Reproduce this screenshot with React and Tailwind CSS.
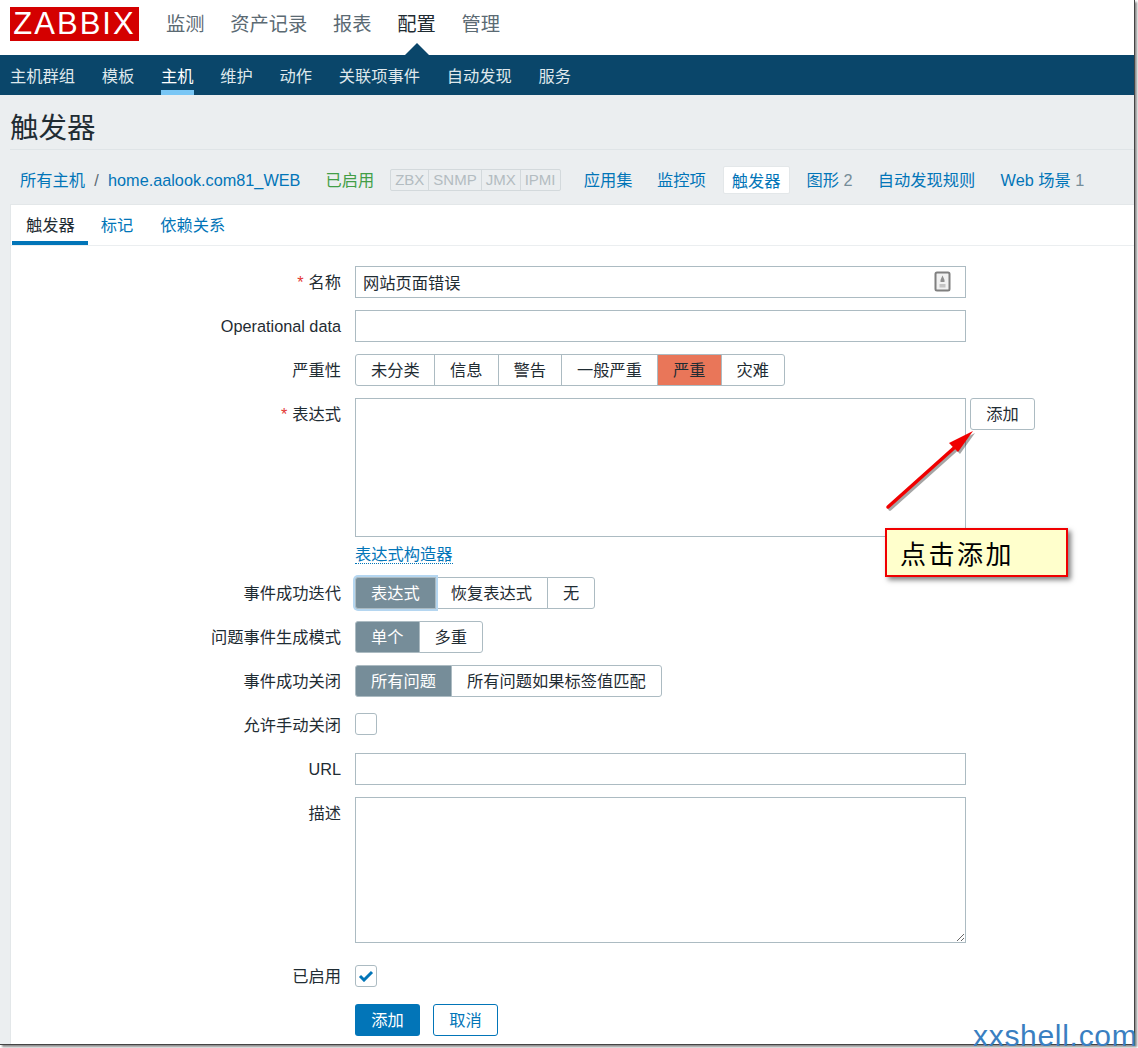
import React from "react";

const FONT = "font-['Liberation_Sans','Noto_Sans_CJK_SC',sans-serif]";

const mainMenu = ["监测", "资产记录", "报表", "配置", "管理"];
const subMenu = ["主机群组", "模板", "主机", "维护", "动作", "关联项事件", "自动发现", "服务"];

const Label = ({ required, children, className = "pt-[5px]" }) => (
  <div className={`w-[330px] shrink-0 text-right text-[16.25px] leading-[22px] text-[#1f2c33] ${className}`}>
    {required && <span className="text-[#e33734] mr-[5px]">*</span>}
    {children}
  </div>
);

const Row = ({ label, required, labelClass, children, className = "mb-3" }) => (
  <div className={`flex ${className}`}>
    <Label required={required} className={labelClass}>{label}</Label>
    <div className="ml-[14px] flex">{children}</div>
  </div>
);

const Segmented = ({ items, active, focus, firstClass = "pr-[15px]", activeClass = "bg-[#768d99] text-white border-[#768d99]" }) => (
  <div className="flex h-8 text-[16.25px] leading-[31px] text-[#1f2c33]">
    {items.map((item, i) => (
      <div
        key={item}
        className={`pl-[15px] border border-[#acbbc2] ${i > 0 ? "-ml-px pr-[15px]" : firstClass} ${i === 0 ? "rounded-l-[3px]" : ""} ${
          i === items.length - 1 ? "rounded-r-[3px]" : ""
        } ${i === active ? activeClass : "bg-white"} ${
          i === active && focus ? "relative shadow-[0_0_0_2px_#b5d6f0]" : ""
        }`}
      >
        {item}
      </div>
    ))}
  </div>
);

const TextInput = ({ value = "", children }) => (
  <div className="relative">
    <input
      readOnly
      defaultValue={value}
      className="block w-[611px] h-8 border border-[#acbbc2] bg-white px-[7px] text-[16.25px] text-[#1f2c33] outline-none"
    />
    {children}
  </div>
);

const HostTab = ({ children, count }) => (
  <span className="text-[#0275b8]">
    {children}
    {count && <span className="text-[#768d99]"> {count}</span>}
  </span>
);

export default function App() {
  return (
    <div className={`relative w-[1138px] h-[1048px] overflow-hidden bg-white ${FONT}`}>
      <div className="w-[1135px] h-[1045px] flex flex-col bg-[#ebeef0] border-r border-b border-[#444444] shadow-[2px_2px_2px_rgba(0,0,0,0.45)]">
        {/* top menu */}
        <header className="h-[55px] shrink-0 bg-white flex items-start pl-[10px] pt-[7px]">
          <div className="w-[129px] h-[34px] bg-[#d40000] text-white text-[31px] leading-[34px] tracking-[2px] text-center">
            ZABBIX
          </div>
          <nav className="flex gap-[25.75px] ml-[27px] text-[19.25px] leading-[36px] text-[#5b6a73]">
            {mainMenu.map((item) => (
              <span key={item} className={item === "配置" ? "relative text-[#1f2c33]" : ""}>
                {item}
                {item === "配置" && (
                  <span className="absolute left-1/2 -translate-x-1/2 top-[36px] w-0 h-0 border-x-[12px] border-x-transparent border-b-[12px] border-b-[#0a466a]" />
                )}
              </span>
            ))}
          </nav>
        </header>
        <nav className="h-10 shrink-0 bg-[#0a466a] flex gap-[26.75px] pl-[10px] text-[16.25px] leading-[42px] text-[#dfe8ec]">
          {subMenu.map((item) => (
            <span key={item} className={item === "主机" ? "h-10 text-white border-b-[5px] border-[#79c6f5]" : ""}>
              {item}
            </span>
          ))}
        </nav>

        {/* title */}
        <div className="ml-[10px] h-[55px] shrink-0 border-b border-[#dfe4e7]">
          <h1 className="text-[28.5px] leading-[66px] font-normal text-[#1f2c33]">触发器</h1>
        </div>

        {/* host navigation */}
        <div className="h-[54px] shrink-0 flex items-center pl-5 pt-[6px] text-[16.25px]">
          <span className="text-[#0275b8]">所有主机</span>
          <span className="mx-[9.25px] text-[#5b6a73]">/</span>
          <span className="text-[#0275b8]">home.aalook.com81_WEB</span>
          <span className="ml-[25px] text-[#429e47]">已启用</span>
          <div className="ml-4 h-[22px] flex border border-[#d3d9dc] rounded-[2px] text-[#b3bcc1] text-[15px] leading-[20px]">
            <span className="px-[4px]">ZBX</span>
            <span className="px-[4px] border-l border-[#d3d9dc]">SNMP</span>
            <span className="px-[4px] border-l border-[#d3d9dc]">JMX</span>
            <span className="px-[4px] border-l border-[#d3d9dc]">IPMI</span>
          </div>
          <div className="ml-[23.25px] flex gap-[24.5px]">
            <HostTab>应用集</HostTab>
            <HostTab>监控项</HostTab>
          </div>
          <div className="ml-[17px] h-7 px-2 leading-7 bg-white rounded-[2px] border border-[#e3e7e9] text-[#0275b8]">触发器</div>
          <div className="ml-[17px] flex gap-[25.25px]">
            <HostTab count="2">图形</HostTab>
            <HostTab>自动发现规则</HostTab>
            <HostTab count="1">Web 场景</HostTab>
          </div>
        </div>

        {/* form card */}
        <main className="ml-[10px] flex-1 bg-white border-t border-l border-[#e3e7e9]">
          <div className="h-[41px] flex gap-[26px] pl-[15px] border-b border-[#ebeef0] text-[16.25px] leading-[40px] text-[#0275b8]">
            <span className="relative text-[#1f2c33]">
              触发器
              <span className="absolute -left-[14px] -right-[13px] top-[36px] h-1 bg-[#0275b8]" />
            </span>
            <span>标记</span>
            <span className="ml-px">依赖关系</span>
          </div>

          <form className="pt-[20px]">
            <Row label="名称" required>
              <TextInput value="网站页面错误">
                <svg className="absolute left-[579px] top-[5px]" width="17" height="21" viewBox="0 0 17 21">
                  <rect x="1.5" y="1.5" width="14" height="18" rx="1.5" fill="#f1f1f1" stroke="#7f7f7f" strokeWidth="2" />
                  <path d="M8.5 4.5 L10.5 9 V11 H6.5 V9 Z" fill="#8f8f8f" />
                  <rect x="5.5" y="13" width="6" height="3.5" fill="#c4c4c4" />
                </svg>
              </TextInput>
            </Row>
            <Row label="Operational data">
              <TextInput />
            </Row>
            <Row label="严重性">
              <Segmented
                items={["未分类", "信息", "警告", "一般严重", "严重", "灾难"]}
                active={4}
                firstClass="pr-[14.25px]"
                activeClass="relative bg-[#e97659] border-[#768d99]"
              />
            </Row>
            <Row label="表达式" required className="mb-[8px]">
              <textarea readOnly className="block w-[611px] h-[139px] border border-[#acbbc2] bg-white outline-none" />
              <button
                type="button"
                className="ml-1 w-[65px] h-8 pt-px border border-[#acbbc2] rounded-[3px] bg-white text-[16.25px] text-[#1f2c33]"
              >
                添加
              </button>
            </Row>
            <div className="ml-[344px] mb-[12px] h-5 text-[16.25px] leading-[18px]">
              <span className="text-[#0275b8] border-b border-dotted border-[#0275b8]">表达式构造器</span>
            </div>
            <Row label="事件成功迭代">
              <Segmented items={["表达式", "恢复表达式", "无"]} active={0} focus />
            </Row>
            <Row label="问题事件生成模式">
              <Segmented items={["单个", "多重"]} active={0} />
            </Row>
            <Row label="事件成功关闭" className="mb-4">
              <Segmented items={["所有问题", "所有问题如果标签值匹配"]} active={0} />
            </Row>
            <Row label="允许手动关闭" labelClass="pt-px" className="mb-[17px]">
              <div className="w-[22px] h-[22px] border border-[#acbbc2] rounded-[3px] bg-white" />
            </Row>
            <Row label="URL">
              <TextInput />
            </Row>
            <Row label="描述" className="mb-[22px]">
              <textarea readOnly className="block w-[611px] h-[146px] border border-[#acbbc2] bg-white outline-none" />
            </Row>
            <Row label="已启用" labelClass="pt-0" className="mb-[17px]">
              <div className="w-[22px] h-[22px] border border-[#acbbc2] rounded-[3px] bg-white flex items-center justify-center">
                <svg width="16" height="12" viewBox="0 0 16 12">
                  <path d="M2 6 L6 10 L14 2" fill="none" stroke="#0275b8" strokeWidth="3" />
                </svg>
              </div>
            </Row>
            <div className="ml-[344px] flex gap-[13px] text-[16.25px]">
              <button type="button" className="w-[65px] h-8 pt-px rounded-[3px] bg-[#0275b8] text-white">
                添加
              </button>
              <button type="button" className="w-[65px] h-8 pt-px rounded-[3px] border border-[#0275b8] bg-white text-[#0275b8]">
                取消
              </button>
            </div>
          </form>
        </main>
      </div>

      {/* screenshot annotation */}
      <svg className="absolute left-[880px] top-[425px]" width="100" height="92" viewBox="0 0 100 92">
        <g transform="translate(2 2)" opacity="0.35" fill="#000" stroke="#000">
          <path d="M8 82 L74 23" strokeWidth="3.5" strokeLinecap="round" />
          <path d="M93 6 L69 18 L78 27 Z" stroke="none" />
        </g>
        <path d="M8 82 L74 23" stroke="#f00000" strokeWidth="3.5" strokeLinecap="round" />
        <path d="M93 6 L69 18 L78 27 Z" fill="#f00000" />
      </svg>
      <div className="absolute left-[885px] top-[528px] w-[183px] h-[49px] pl-[13px] border-2 border-[#f00000] bg-[#ffffcc] shadow-[3px_3px_5px_rgba(0,0,0,0.5)] text-[26px] leading-[52px] tracking-[2.5px] text-black font-['Liberation_Serif','Noto_Sans_CJK_SC',serif]">
        点击添加
      </div>
      <div className="absolute left-[973px] top-[1024px] text-[30px] leading-[24px] tracking-[0.7px] text-[#3a7fc1] whitespace-nowrap">
        xxshell.com
      </div>
    </div>
  );
}
